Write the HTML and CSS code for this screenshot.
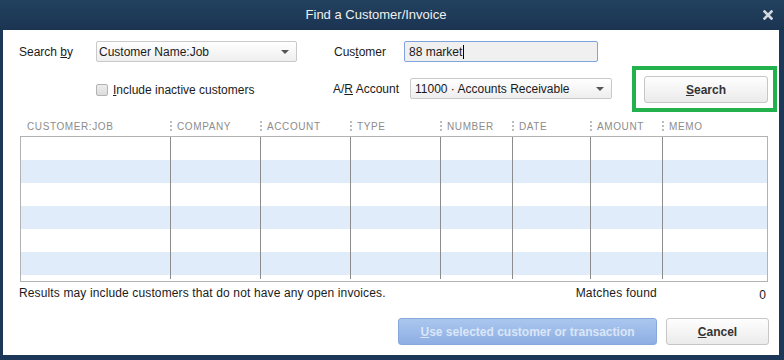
FILE: index.html
```html
<!DOCTYPE html>
<html>
<head>
<meta charset="utf-8">
<link rel="stylesheet" href="styles.css">
</head>
<body>
<div class="dialog">
  <div class="titlebar">
    <span class="title">Find a Customer/Invoice</span>
    <svg class="close" width="10" height="10" viewBox="0 0 10 10"><path d="M1.5 1.5 L8.5 8.5 M8.5 1.5 L1.5 8.5" stroke="#d3d8de" stroke-width="2.6" stroke-linecap="square"/></svg>
  </div>
  <div class="content">
    <div class="form">
      <div class="fields">
        <div class="row row-a">
          <span class="lbl lbl-search">Search <u>b</u>y</span>
          <div class="select sel-searchby"><span>Customer Name:Job</span><i class="arrow"></i></div>
          <span class="lbl lbl-customer">Cus<u>t</u>omer</span>
          <div class="input"><span>88 market</span><i class="caret"></i></div>
        </div>
        <div class="row row-b">
          <div class="check"><span class="box"></span><span><u>I</u>nclude inactive customers</span></div>
          <span class="lbl lbl-ar">A/<u>R</u> Account</span>
          <div class="select sel-ar"><span>11000 · Accounts Receivable</span><i class="arrow"></i></div>
        </div>
      </div>
      <div class="highlight"><div class="btn btn-search"><u>S</u>earch</div></div>
    </div>
    <div class="table">
      <div class="thead">
        <div class="th first">CUSTOMER:JOB</div>
        <div class="th">COMPANY</div>
        <div class="th">ACCOUNT</div>
        <div class="th">TYPE</div>
        <div class="th">NUMBER</div>
        <div class="th">DATE</div>
        <div class="th">AMOUNT</div>
        <div class="th">MEMO</div>
      </div>
      <div class="tbody">
        <div class="tr"><div></div><div></div><div></div><div></div><div></div><div></div><div></div><div></div></div>
        <div class="tr alt"><div></div><div></div><div></div><div></div><div></div><div></div><div></div><div></div></div>
        <div class="tr"><div></div><div></div><div></div><div></div><div></div><div></div><div></div><div></div></div>
        <div class="tr alt"><div></div><div></div><div></div><div></div><div></div><div></div><div></div><div></div></div>
        <div class="tr"><div></div><div></div><div></div><div></div><div></div><div></div><div></div><div></div></div>
        <div class="tr alt"><div></div><div></div><div></div><div></div><div></div><div></div><div></div><div></div></div>
        <div class="tr filler"><div></div><div></div><div></div><div></div><div></div><div></div><div></div><div></div></div>
      </div>
    </div>
    <div class="info">
      <span class="note">Results may include customers that do not have any open invoices.</span>
      <span class="matches">Matches found</span>
      <span class="count">0</span>
    </div>
    <div class="actions">
      <div class="btn btn-use"><u>U</u>se selected customer or transaction</div>
      <div class="btn btn-cancel"><u>C</u>ancel</div>
    </div>
  </div>
</div>
</body>
</html>
```

FILE: styles.css
```css
* { box-sizing: border-box; }
html, body { margin: 0; padding: 0; }
body {
  font-family: "Liberation Sans", Arial, sans-serif;
  font-size: 12px;
  color: #1b1b1b;
  background: #1c3757;
}
.dialog {
  width: 784px;
  height: 360px;
  background: #1c3757;
  padding: 0 5px 5px 3px;
  display: flex;
  flex-direction: column;
}
.titlebar {
  height: 30px;
  margin: 0 -5px 0 -3px;
  padding: 0 11px 0 3px;
  background: linear-gradient(#22425f, #1b3452);
  display: flex;
  align-items: center;
}
.title {
  flex: 1;
  text-align: center;
  color: #f0f0f0;
  font-size: 13px;
  padding-right: 14px;
  padding-bottom: 1px;
}
.close { flex: none; }
.content {
  flex: 1;
  background: #ffffff;
  padding: 11px 10px 10px 16px;
  display: flex;
  flex-direction: column;
}
.form {
  display: flex;
  height: 71px;
}
.fields { flex: none; }
.row {
  display: flex;
  align-items: center;
  height: 21px;
}
.row-b { margin-top: 16px; }
.lbl { flex: none; white-space: nowrap; }
.lbl-search { width: 77px; }
.lbl-customer { width: 70px; margin-left: 37px; }
.lbl-ar { width: 77px; }
.select {
  height: 21px;
  border: 1px solid #c9c9c9;
  border-radius: 2px;
  background: linear-gradient(#ffffff, #eeeeee);
  display: flex;
  align-items: center;
  justify-content: space-between;
  padding: 0 7px 0 2px;
  white-space: nowrap;
}
.sel-searchby { width: 201px; }
.sel-ar { width: 202px; padding-left: 4px; }
.arrow {
  width: 0;
  height: 0;
  border-left: 4px solid transparent;
  border-right: 4px solid transparent;
  border-top: 4px solid #555555;
}
.input {
  width: 194px;
  height: 21px;
  border: 1px solid #7fa3dc;
  border-radius: 2px;
  background: #f0f0f0;
  display: flex;
  align-items: center;
  padding-left: 4px;
}
.caret {
  width: 1px;
  height: 14px;
  background: #000;
  margin-left: 1px;
}
.check {
  width: 237px;
  margin-left: 77px;
  display: flex;
  align-items: center;
  padding-top: 2px;
}
.box {
  width: 12px;
  height: 12px;
  border: 1px solid #b3b3b3;
  border-radius: 2px;
  background: linear-gradient(#ececec, #dcdcdc);
  margin-right: 5px;
}
.highlight {
  margin-left: auto;
  margin-top: 25px;
  margin-right: -8px;
  width: 145px;
  height: 46px;
  border: 4px solid #23b14d;
  padding: 6px 5px 5px 8px;
}
.btn {
  height: 27px;
  border-radius: 3px;
  display: flex;
  align-items: center;
  justify-content: center;
  font-weight: bold;
  font-size: 12px;
  white-space: nowrap;
}
.btn-search, .btn-cancel {
  border: 1px solid #c6c6c6;
  background: linear-gradient(#fefefe, #ebebeb);
  color: #333333;
}
.btn-search { width: 124px; }
.table {
  margin-top: 8px;
  margin-left: 1px;
  width: 748px;
}
.thead {
  height: 16px;
  display: grid;
  grid-template-columns: 150px 90px 90px 90px 72px 78px 72px 1fr;
}
.th {
  display: flex;
  align-items: center;
  padding-bottom: 4px;
  font-size: 10px;
  letter-spacing: 0.6px;
  color: #8c8c8c;
  white-space: nowrap;
}
.th.first { padding-left: 7px; }
.th:not(.first)::before {
  content: "";
  width: 0;
  height: 10px;
  border-left: 2px dotted #bdbdbd;
  margin-right: 5px;
}
.tbody {
  height: 146px;
  border: 1px solid #b2b2b2;
}
.tr {
  height: 23px;
  display: grid;
  grid-template-columns: 149px 90px 90px 90px 72px 78px 72px 1fr;
}
.tr.alt { background: #e1ecfb; }
.tr.filler { height: 4px; }
.tr > div + div { border-left: 1px solid #8c8c8c; }
.info {
  height: 22px;
  display: flex;
  align-items: center;
}
.note { flex: 1; letter-spacing: 0.13px; }
.matches { letter-spacing: 0.2px; }
.count {
  width: 112px;
  text-align: right;
  padding-right: 3px;
  padding-top: 4px;
}
.actions {
  margin-top: 14px;
  display: flex;
  justify-content: flex-end;
  gap: 9px;
}
.btn-use {
  width: 259px;
  border: 1px solid #88a8dd;
  background: linear-gradient(#aac7ef, #8eaee3);
  color: #dbe6f7;
}
.btn-cancel { width: 103px; }
```
